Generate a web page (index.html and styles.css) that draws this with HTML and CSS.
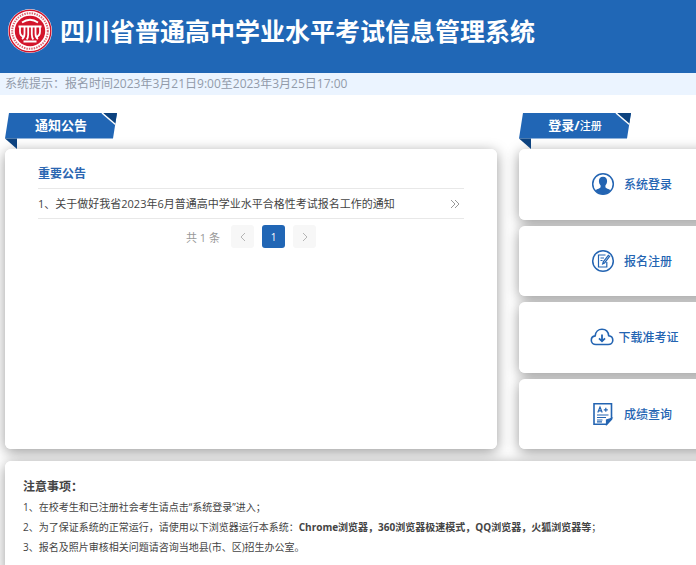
FILE: index.html
```
<!DOCTYPE html>
<html lang="zh-CN">
<head>
<meta charset="utf-8">
<title>四川省普通高中学业水平考试信息管理系统</title>
<link rel="stylesheet" href="styles.css">
</head>
<body>
<div class="page">
  <header class="header">
    <svg class="logo" viewBox="0 0 44 44" aria-hidden="true">
      <circle cx="22" cy="22" r="22" fill="#fff"/>
      <circle cx="22" cy="22" r="20.800" fill="none" stroke="#d3142b" stroke-width="1.400"/>
      <circle cx="22" cy="22" r="17.800" fill="none" stroke="#dd6672" stroke-width="2" stroke-dasharray="1.500 1"/>
      <circle cx="22" cy="22" r="15.200" fill="#d3142b"/>
      <g fill="none" stroke="#fff" stroke-width="1.800">
        <path d="M14 13.500q8-5.500 16 0M10.500 17.500h23"/>
        <path d="M12 17.500v5q0 4.500 4 5.500M32 17.500v5q0 4.500-4 5.500M16.500 17.500v7q0 4-2.500 5.500M27.500 17.500v7q0 4 2.500 5.500M20.200 17.500v8q0 3-1.500 5M23.800 17.500v8q0 3 1.500 5M15.500 32.500h13"/>
      </g>
    </svg>
    <h1 class="title">四川省普通高中学业水平考试信息管理系统</h1>
  </header>
  <p class="tip">系统提示：报名时间2023年3月21日9:00至2023年3月25日17:00</p>

  <main class="main">
    <section class="column">
      <h2 class="ribbon">
        <svg class="ribbon-shape" viewBox="0 0 112 36" aria-hidden="true">
          <path d="M4 0h108l-4 25.500H0z" fill="#2166b5"/>
          <path d="M0 25.500h12V36z" fill="#0c427f"/>
          <path d="M98 0h14l-2 12z" fill="#0c427f"/>
          <path d="M97 0l13.500 11.500" stroke="#fff" stroke-width="1.500"/>
        </svg>
        <span class="ribbon-text">通知公告</span>
      </h2>
      <div class="card news">
        <h3 class="news-title">重要公告</h3>
        <ul class="news-list">
          <li><a class="news-link" href="#"><span>1、关于做好我省2023年6月普通高中学业水平合格性考试报名工作的通知</span>
            <svg class="more" viewBox="0 0 10 10" aria-hidden="true"><path d="M1 1l4 4-4 4M5 1l4 4-4 4"/></svg></a></li>
        </ul>
        <nav class="pager" aria-label="分页">
          <span class="total">共 1 条</span>
          <button class="page-btn" aria-label="上一页" disabled><svg viewBox="0 0 10 10"><path d="M7 1L3 5l4 4"/></svg></button>
          <button class="page-btn current">1</button>
          <button class="page-btn" aria-label="下一页" disabled><svg viewBox="0 0 10 10"><path d="M3 1l4 4-4 4"/></svg></button>
        </nav>
      </div>
    </section>

    <section class="column">
      <h2 class="ribbon">
        <svg class="ribbon-shape" viewBox="0 0 112 36" aria-hidden="true">
          <path d="M4 0h108l-4 25.500H0z" fill="#2166b5"/>
          <path d="M0 25.500h12V36z" fill="#0c427f"/>
          <path d="M98 0h14l-2 12z" fill="#0c427f"/>
          <path d="M97 0l13.500 11.500" stroke="#fff" stroke-width="1.500"/>
        </svg>
        <span class="ribbon-text">登录/<small>注册</small></span>
      </h2>
      <nav class="actions">
        <a class="card action" href="#">
          <svg class="icon" viewBox="0 0 24 24" aria-hidden="true">
            <circle cx="12" cy="12" r="10.300" fill="none" stroke="#2364b2" stroke-width="1.500"/>
            <path fill="#2364b2" d="M12 4.800c2.700 0 4.200 1.900 4.100 4.500-.1 1.900-.8 3.200-1.700 4.100v1.900c.5 1.200 3.300 1.500 5 2.900-1.800 2.500-4.500 4-7.400 4s-5.600-1.500-7.400-4c1.700-1.400 4.500-1.700 5-2.900v-1.900c-.9-.9-1.600-2.200-1.700-4.100-.1-2.600 1.400-4.500 4.100-4.500z"/>
          </svg>
          <span>系统登录</span>
        </a>
        <a class="card action" href="#">
          <svg class="icon line" viewBox="0 0 24 24" aria-hidden="true">
            <circle cx="12" cy="12" r="10.300" stroke-width="1.500"/>
            <path d="M14.500 6H7.500v12h8.300v-5M9.500 9h3.500M9.500 11.500h2"/>
            <path d="M17.300 6.300l-5 6.500-.6 2 1.900-.9 5-6.500z"/>
          </svg>
          <span>报名注册</span>
        </a>
        <a class="card action download" href="#">
          <svg class="icon line" viewBox="0 0 24 24" aria-hidden="true">
            <path stroke-width="1.600" d="M8 19.500H6C3.300 19.500 1.300 17.700 1.300 15.200c0-2.300 1.600-4 3.900-4.300C5.500 6.900 8.300 4.300 12 4.300s6.300 2.500 6.700 6.500c2.400.3 4.100 2.100 4.100 4.400 0 2.500-2 4.300-4.700 4.300H8"/>
            <path stroke-width="1.800" d="M12 9.500v6.500M9 13.300l3 3 3-3"/>
          </svg>
          <span>下载准考证</span>
        </a>
        <a class="card action" href="#">
          <svg class="icon line" viewBox="0 0 24 24" aria-hidden="true">
            <path stroke-width="1.600" d="M3 1.800h17.500v15.500l-4.800 5H3z"/>
            <path fill="#2364b2" d="M20.500 16.500l-5 6v-4.500z"/>
            <path d="M6.800 10.500L9 5l2.200 5.500M7.600 8.800h2.800M12.800 7.800h4M14.800 5.800v4M6 13h11.500M6 15.500h9M6 18h5.500M6 19.800h5"/>
          </svg>
          <span>成绩查询</span>
        </a>
      </nav>
    </section>

    <section class="card notes">
      <h3 class="notes-title">注意事项：</h3>
      <p>1、在校考生和已注册社会考生请点击“系统登录”进入；</p>
      <p>2、为了保证系统的正常运行，请使用以下浏览器运行本系统：<b>Chrome浏览器，360浏览器极速模式，QQ浏览器，火狐浏览器等</b>；</p>
      <p>3、报名及照片审核相关问题请咨询当地县(市、区)招生办公室。</p>
    </section>
  </main>
</div>
</body>
</html>
```
FILE: styles.css
```
* {
  box-sizing: border-box;
}

body {
  margin: 0;
  overflow-x: hidden;
  background: #fff;
  color: #444;
  font-family: "Open Sans", "Noto Sans CJK SC", sans-serif;
  font-size: 12px;
}

h1, h2, h3, p, ul {
  margin: 0;
  padding: 0;
}

a {
  color: inherit;
  text-decoration: none;
}

.page {
  min-width: 749px;
}

.header {
  display: flex;
  align-items: flex-start;
  gap: 8px;
  padding: 9px 8px 20px;
  background: #2067b6;
}

.logo {
  width: 44px;
  height: 44px;
}

.title {
  color: #fff;
  font-size: 25px;
  line-height: 44px;
  font-weight: 700;
}

.tip {
  padding: 0 5px;
  background: #ebf4ff;
  color: #929baa;
  font-size: 12px;
  line-height: 22px;
}

.main {
  display: grid;
  grid-template-columns: 492fr 225fr;
  gap: 12px 22px;
  padding: 18px 5px 12px;
  isolation: isolate;
}

.column {
  display: flex;
  flex-direction: column;
}

.ribbon {
  position: relative;
  width: 112px;
  height: 36px;
  color: #fff;
  font-size: 13px;
  line-height: 25px;
  text-align: center;
}

.ribbon small {
  font-size: 11px;
  font-weight: 500;
}

.ribbon-shape {
  position: absolute;
  inset: 0;
  z-index: -1;
}

.card {
  position: relative;
  border-radius: 6px;
  background: #fff;
}

/* Shadows sit below every card, so neighbours stay clean. */
.card::before {
  content: "";
  position: absolute;
  inset: 0;
  z-index: -2;
  border-radius: 6px;
  box-shadow: 0 3px 14px rgba(0, 0, 0, 0.4);
}

.news {
  min-height: 300px;
  padding: 15px 33px;
}

.news-title {
  padding-bottom: 4px;
  border-bottom: 1px solid #e8e8e8;
  color: #2b66b1;
  font-size: 12px;
  line-height: 20px;
}

.news-list {
  list-style: none;
}

.news-link {
  display: flex;
  justify-content: space-between;
  align-items: center;
  padding-right: 4px;
  border-bottom: 1px solid #e8e8e8;
  font-size: 11px;
  line-height: 29px;
}

.more {
  width: 10px;
  height: 10px;
  fill: none;
  stroke: #999;
}

.pager {
  display: flex;
  justify-content: center;
  align-items: center;
  gap: 8px;
  padding-top: 6px;
}

.total {
  margin-right: 3px;
  color: #999;
  font-size: 11px;
}

.page-btn {
  display: grid;
  place-items: center;
  width: 23px;
  height: 23px;
  padding: 0;
  border: 0;
  border-radius: 3px;
  background: #f7f7f7;
  font: inherit;
  font-size: 10px;
}

.page-btn svg {
  width: 10px;
  height: 10px;
  fill: none;
  stroke: #b5b5b5;
}

.page-btn.current {
  background: #2166b5;
  color: #fff;
}

.actions {
  display: flex;
  flex: 1;
  flex-direction: column;
  gap: 6px;
}

.action {
  display: flex;
  flex: 1;
  justify-content: center;
  align-items: center;
  gap: 9px;
  color: #2364b2;
  font-size: 12px;
  font-weight: 500;
}

.download {
  gap: 4px;
  padding-left: 6px;
}

.icon {
  width: 24px;
  height: 24px;
}

.line {
  fill: none;
  stroke: #2364b2;
  stroke-width: 1.2;
}

.notes {
  grid-column: 1 / -1;
  padding: 16px 18px;
  font-size: 10px;
  line-height: 20px;
}

.notes-title {
  font-size: 12px;
}
```
